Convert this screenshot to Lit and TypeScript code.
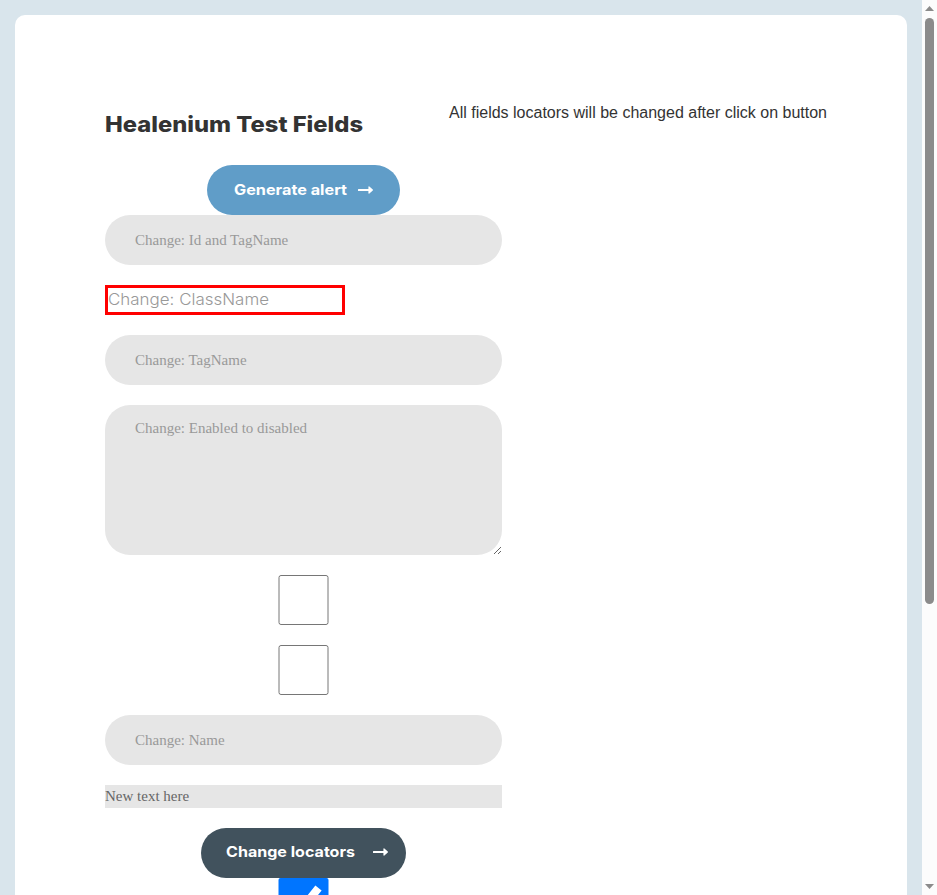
import { LitElement, html, css, svg } from "lit";
import { customElement } from "lit/decorators.js";

const arrow = svg`<path d="M0.5 3H10.4V0.9Q10.6 0 11.4 0.6L14.8 3.6Q15.2 4 14.8 4.4L11.4 7.4Q10.6 8 10.4 7.1V5H0.5Q0 5 0 4.5V3.5Q0 3 0.5 3Z" fill="#fff"/>`;

@customElement("app-root")
export class AppRoot extends LitElement {
  static styles = css`
    :host { display: flex; width: 100%; height: 100vh; overflow: hidden; background: #d9e5ec; }
    * { box-sizing: border-box; }
    .page { flex: 1; min-width: 0; height: 100%; overflow: hidden; padding: 15px; }
    .card {
      display: grid; grid-template-columns: 344px auto; justify-content: start; align-items: start;
      height: 1260px; padding: 87px 80px 0 90px; background: #fff; border-radius: 10px;
    }
    .form { display: flex; flex-direction: column; align-items: center; width: 397px; }
    .title { display: block; align-self: flex-start; width: 280px; height: 63px; margin: 0; }
    .title text { font: 800 21.5px Inter, sans-serif; fill: #333; }
    .note { margin: 1px 0 0; font: 16px/20px "Liberation Sans", sans-serif; color: #333; white-space: nowrap; }
    .btn {
      display: flex; flex: none; height: 50px; padding: 0; border: 0; border-radius: 25px; overflow: hidden;
      background: #609dc8;
    }
    .btn text { font: 700 14.6px Inter, sans-serif; fill: #fff; }
    .alert { width: 193px; }
    .change { width: 205px; background: #41525d; }
    .field {
      display: block; flex: none; width: 100%; height: 50px; margin: 0 0 20px; padding: 0 30px; border: 0; outline: 0;
      border-radius: 25px; background: #e6e6e6; font: 15px/22.5px "Liberation Serif", serif; color: #666;
    }
    .field::placeholder { color: #999; opacity: 1; }
    .area { height: 150px; padding-top: 12px; }
    .framed { flex: none; align-self: flex-start; width: 240px; height: 30px; margin-bottom: 20px; border: 3px solid #f00; }
    .framed svg { display: block; }
    .framed text { font: 300 15.6px Inter, sans-serif; fill: #999; }
    .check { flex: none; width: 100%; height: 50px; margin: 0 0 20px; }
    .line { width: 100%; height: 23px; margin-bottom: 20px; background: #e6e6e6; font: 15px/23px "Liberation Serif", serif; color: #666; }
    .bar { display: flex; flex-direction: column; align-items: center; flex: none; width: 15px; height: 100%; padding: 6px 0; background: #fcfcfc; }
    .bar svg { flex: none; display: block; }
    .thumb { width: 9px; height: 586px; margin-top: 7px; border-radius: 5px; background: #8b8b8b; }
    .gap { flex: 1; }
  `;

  render() {
    return html`
      <div class="page">
        <main class="card">
          <form class="form" @submit=${(e: Event) => e.preventDefault()}>
            <h1 class="title">
              <svg width="280" height="50"><text x="0" y="30" textLength="258" lengthAdjust="spacingAndGlyphs">Healenium Test Fields</text></svg>
            </h1>
            <button class="btn alert" type="button">
              <svg width="193" height="50">
                <text x="27" y="30" textLength="113" lengthAdjust="spacingAndGlyphs">Generate alert</text>
                <g transform="translate(151 21)">${arrow}</g>
              </svg>
            </button>
            <input class="field" placeholder="Change: Id and TagName">
            <div class="framed">
              <svg width="234" height="24"><text x="0" y="17" textLength="161" lengthAdjust="spacingAndGlyphs">Change: ClassName</text></svg>
            </div>
            <input class="field" placeholder="Change: TagName">
            <textarea class="field area" placeholder="Change: Enabled to disabled"></textarea>
            <input class="check" type="checkbox">
            <input class="check" type="checkbox">
            <input class="field" placeholder="Change: Name">
            <div class="line">New text here</div>
            <button class="btn change" type="button">
              <svg width="205" height="50">
                <text x="25" y="29" textLength="129" lengthAdjust="spacingAndGlyphs">Change locators</text>
                <g transform="translate(172 20)">${arrow}</g>
              </svg>
            </button>
            <input class="check" type="checkbox" checked>
          </form>
          <p class="note">All fields locators will be changed after click on button</p>
        </main>
      </div>
      <div class="bar">
        <svg width="9" height="5"><path d="M4.5 0L9 5H0Z" fill="#8b8b8b"/></svg>
        <div class="thumb"></div>
        <div class="gap"></div>
        <svg width="9" height="5"><path d="M0 0H9L4.5 5Z" fill="#8b8b8b"/></svg>
      </div>
    `;
  }
}
